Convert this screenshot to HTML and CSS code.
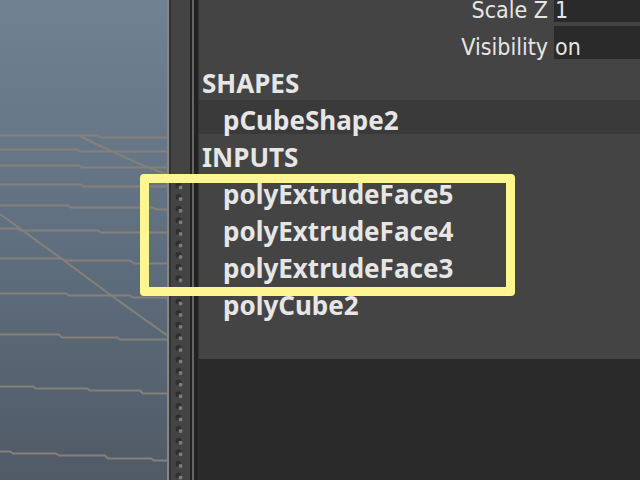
FILE: index.html
```
<!DOCTYPE html>
<html lang="en">
<head>
    <meta charset="UTF-8">
    <meta name="viewport" content="width=device-width, initial-scale=1.0">
    <title>Channel Box</title>
    <link rel="stylesheet" href="styles.css">
</head>
<body>
    <div class="workspace">
        <div class="viewport">
            <!-- perspective grid -->
            <svg class="grid-lines" width="168" height="480" viewBox="0 0 168 480">
                <path d="M0 135.5H98L101 137.5H168"/>
                <path d="M0 149.5H77L80 151.5H168"/>
                <path d="M0 165.5H79L82 167.5H168"/>
                <path d="M0 184.5H81L84 186.5H168"/>
                <path d="M0 205.5H68L71 207.5H153L157 209.5H168"/>
                <path d="M0 228.5H17L20 230.5H98L101 232.5H168"/>
                <path d="M0 258.5H62L65 260.5H130L134 263.5H168"/>
                <path d="M0 293.5H66L69 295.5H130L133 297.5H168"/>
                <path d="M0 334.5H59L62 337.5H117L120 339.5H168"/>
                <path d="M0 386.5H33L36 388.5H87L90 390.5H140L143 393.5H168"/>
                <path d="M0 451.5H10L13 453.5H56L59 455.5H105L108 458.5H151L154 460.5H168"/>
                <path d="M80 136L96 144L118 154L140 164L168 175"/>
                <path d="M0 214L66 262L116 299L168 336"/>
            </svg>
        </div>

        <div class="splitter">
            <svg class="grip" width="12" height="480" viewBox="0 0 12 480">
                <path class="grip-shadow" d="M4.5 185.5V480"/>
                <path class="grip-dot" d="M6.5 187.5V480"/>
            </svg>
        </div>

        <div class="panel">
            <div class="channel-box">
                <div class="channels">
                    <label for="scaleZ">Scale Z</label>
                    <input type="text" id="scaleZ" value="1">
                    <label for="visibility">Visibility</label>
                    <input type="text" id="visibility" value="on">
                </div>

                <div class="nodes">
                    <h2>SHAPES</h2>
                    <button class="node selected">pCubeShape2</button>
                    <h2>INPUTS</h2>
                    <button class="node">polyExtrudeFace5</button>
                    <button class="node">polyExtrudeFace4</button>
                    <button class="node">polyExtrudeFace3</button>
                    <button class="node">polyCube2</button>
                </div>
            </div>
        </div>

        <div class="highlight"></div>
    </div>
</body>
</html>
```
FILE: styles.css
```
:root {
    --panel: #444444;
    --field: #2a2a2a;
    --text: #e6e6e6;
    --line: #858079;
    --mark: #fff591;
}

* {
    box-sizing: border-box;
}

body {
    margin: 0;
    background: #2a2a2a;
    color: var(--text);
    font-family: "DejaVu Sans Condensed", "Noto Sans", sans-serif;
    font-size: 23px;
}

.workspace {
    position: relative;
    display: flex;
    min-height: 100vh;
    overflow: hidden;
}

.viewport {
    flex: 0 0 169px;
    border-right: 2px solid #85858a;
    background: linear-gradient(#708191, #657586 35%, #596775 70%, #505a66);
    overflow: hidden;
}

.grid-lines {
    display: block;
    fill: none;
    stroke: var(--line);
    stroke-width: 2;
}

/* divider between the viewport and the channel box */
.splitter {
    flex: 0 0 29px;
    display: flex;
    padding-left: 5px;
    background: linear-gradient(to right, #333 2px, #444 2px, #444 21px, #222 21px, #222 23px, #666 23px, #666 25px, #222 25px);
}

.grip {
    display: block;
    fill: none;
    stroke-linecap: round;
    stroke-dasharray: 0 11.6;
}

.grip-shadow {
    stroke: #2f2f2f;
    stroke-width: 6;
}

.grip-dot {
    stroke: #7c7c7c;
    stroke-width: 4;
}

.panel {
    flex: 1;
    min-width: 0;
    border-left: 1px solid #333;
}

/* scrolled a little, so the first channel is cut by the top edge */
.channel-box {
    margin-top: -11px;
    padding-bottom: 40px;
    background: var(--panel);
}

.channels {
    display: grid;
    grid-template-columns: 1fr 86px;
    gap: 4px 6px;
    line-height: 23px;
    margin-bottom: 4px;
}

.channels label {
    padding-top: 10px;
    text-align: right;
}

.channels input {
    width: 100%;
    height: 33px;
    padding: 8px 1px 0;
    border: none;
    background: var(--field);
    color: var(--text);
    font: inherit;
}

.nodes {
    display: grid;
    gap: 3px;
    font-family: "Noto Sans", sans-serif;
    font-size: 26px;
    line-height: 28px;
}

.nodes h2 {
    margin: 0;
    padding: 6px 0 0 3px;
    font-size: 26px;
    font-weight: bold;
}

.node {
    height: 34px;
    padding: 6px 0 0 24px;
    border: none;
    background: none;
    color: inherit;
    font: inherit;
    font-weight: bold;
    text-align: left;
}

.node.selected {
    background: #3a3a3a;
}

.highlight {
    position: absolute;
    top: 174px;
    left: 140px;
    width: 375px;
    height: 122px;
    border: 9px solid var(--mark);
    border-radius: 4px;
    pointer-events: none;
}
```
